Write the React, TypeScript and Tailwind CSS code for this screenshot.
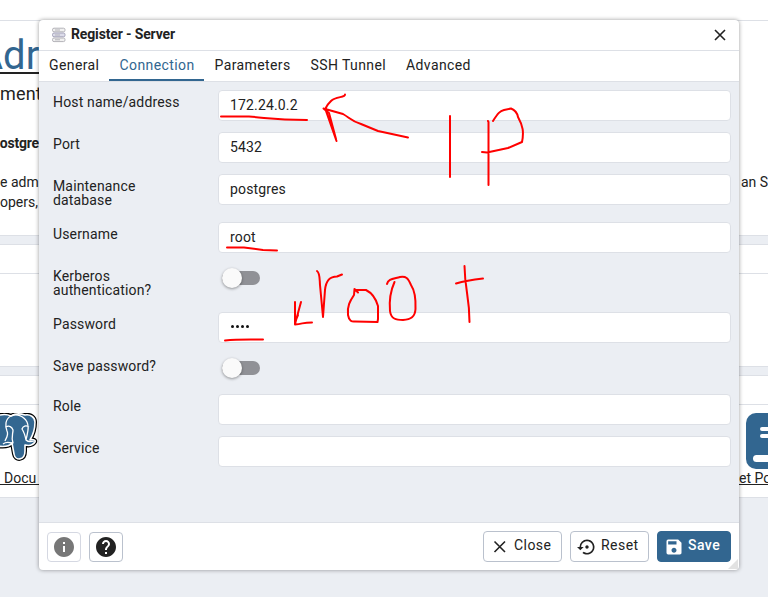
import React from "react";
import { MdInfo, MdHelp, MdSettingsBackupRestore, MdSave } from "react-icons/md";

type FieldProps = { label: string; value?: string; gap: string; toggle?: boolean; password?: boolean };

function Field({ label, value, gap, toggle, password }: FieldProps) {
  return (
    <div className={`flex items-start ${gap}`}>
      <div className="w-[165px] shrink-0 pt-[5px] text-[14px] leading-[14px]">
        <div className="w-[130px]">{label}</div>
      </div>
      {toggle ? (
        <div className="flex h-[26px] w-[42px] items-center pl-[4px]">
          <div className="relative mt-[1px] h-[14px] w-[38px] rounded-full bg-[#909196]">
            <div className="absolute -top-[3px] left-0 size-[20px] rounded-full bg-[#fafafa] shadow-[0_1px_3px_rgba(0,0,0,0.4)]" />
          </div>
        </div>
      ) : (
        <div className="flex h-[31px] flex-1 items-center rounded-[4px] border border-[#dde0e6] bg-white px-[11px] text-[14px]">
          {password ? (
            <div className="flex gap-[2px] pb-[2px] pl-px">
              {[0, 1, 2, 3].map((i) => (
                <span key={i} className="size-[3px] rounded-full bg-[#111]" />
              ))}
            </div>
          ) : (
            <span className="tracking-[0.15px]">{value}</span>
          )}
        </div>
      )}
    </div>
  );
}

function ServerIcon() {
  return (
    <svg width="16" height="16" viewBox="0 0 16 16" fill="none" stroke="#b3b2b8">
      <rect x="1.5" y="1.2" width="12.5" height="3.6" rx="1.5" fill="#f1f1f1" />
      <rect x="1.5" y="6" width="12.5" height="3.8" rx="1.5" fill="#dcdcea" stroke="#a3a2b8" />
      <rect x="1.5" y="11" width="12.5" height="3.6" rx="1.5" fill="#f1f1f1" />
      <path d="M4 3h5M4 8h5M4 12.8h5" />
    </svg>
  );
}

const HEAD = "M-3 3C2 1 7 1 11 3C16 0 22 1 25 2C30 1 35 4 35 9C35 16 33 22 30 27C33 26 36 27 35 29C33 32 29 33 25 32V38C25 48 15 48 14 41L12 30C9 34 3 34-3 33Z";

function Elephant() {
  return (
    <svg width="39" height="50" viewBox="0 0 39 50" className="shrink-0" strokeLinejoin="round">
      <path d={HEAD} fill="#000" stroke="#000" strokeWidth="4" />
      <path d={HEAD} fill="#336791" stroke="#fff" strokeWidth="1.6" />
      <path
        d="M11 3C5 6 5 13 7 18C9 22 6 25 5 28M11 3C16 0 24 3 27 9C30 15 27 21 26 27C28 29 31 29 34 28M6 14C9 12 12 14 13 17C13 21 11 24 13 30C9 30 7 28 3 31M29 14C26 12 23 13 22 16C24 19 25 22 26 27"
        fill="none" stroke="#fff" strokeWidth="1.3"
      />
    </svg>
  );
}

function Dashboard() {
  return (
    <div className="flex h-[597px] flex-col overflow-hidden bg-[#ebeef3] whitespace-nowrap">
      <section className="h-[236px] shrink-0 border-b border-[#dde0e6] bg-white">
        <div className="h-[21px] border-b border-[#dde0e6]" />
        <div className="flex h-[53px] w-[39px] justify-start overflow-hidden border-b-2 border-[#222] text-[40px] leading-[70px] text-[#326690]">
          <span className="-ml-[23px]">Adr</span>
        </div>
        <div className="h-[40px] w-[39px] overflow-hidden text-[18px] leading-[40px] tracking-[0.2px]">ment</div>
        <div className="-ml-[9px] h-[57px] w-[48px] overflow-hidden pt-[19px] text-[14px] leading-[20px] font-bold tracking-[-0.2px]">Postgre</div>
        <div className="flex h-[20px] justify-between text-[14px] leading-[22px]">
          <span>e adm</span>
          <span className="w-[27px]">an S</span>
        </div>
        <div className="text-[14px] leading-[22px]">opers,</div>
      </section>
      <section className="mt-[8px] h-[123px] shrink-0 border-y border-[#dde0e6] bg-white">
        <div className="h-[29px] border-b border-[#dde0e6]" />
      </section>
      <section className="mt-[8px] h-[123px] shrink-0 border-y border-[#dde0e6] bg-white">
        <div className="h-[29px] border-b border-[#dde0e6]" />
        <div className="flex h-[65px] items-start justify-between pt-[8px]">
          <Elephant />
          <svg width="22" height="56" viewBox="0 0 22 56">
            <rect width="56" height="56" rx="10" fill="#326690" />
            <path d="M16 16H30M16 23H30" stroke="#fff" strokeWidth="4" strokeLinecap="round" />
            <rect x="7" y="42" width="40" height="7" rx="3.5" fill="#fff" />
          </svg>
        </div>
        <div className="flex h-[15px] justify-between text-[14px] leading-[16px]">
          <span className="w-[39px] overflow-hidden border-b border-[#222] pl-[4px]">Docu</span>
          <span className="w-[29px] border-b border-[#222]">et Po</span>
        </div>
      </section>
    </div>
  );
}

const BUTTON = "flex h-[31px] items-center rounded-[4px] border text-[14px] tracking-[0.45px]";

function Annotations() {
  return (
    <svg className="pointer-events-none absolute inset-0" width="768" height="597" fill="none" stroke="#ff0000" strokeWidth="2" strokeLinecap="round" strokeLinejoin="round">
      <path d="M221 116.5H249C269 118 275 120 307 120" />
      <path d="M345 94.5C345 98 336 96 331 101C327 105 325 109 326 111L336.500 141M323.500 108.500L343 114C350 118 351 121 361 124L378 131L408 137.500M324 109L329 113L336 139" />
      <path d="M450 116V177M488 121L488.500 122V185M493 121C498 113 500 111 504 110L511 108.500C515 110 517 112 518 117C523 126 524 132 522 142L508 148L487 152.500L482 152" />
      <path d="M227 247.500H244L263 250L277 250.500M225 340.500C238 339 250 339.500 263 339.500" />
      <path d="M295 302V324L301 302M295 324.500C304 323.500 303 322.500 312 322.500M295 322L298 315" />
      <path d="M317 271C320 273 319.500 278 320 285L323 317L325 290C326 280 330 276.500 337 276.500L342 274.500" />
      <path d="M358 292.500L354.500 289L354 295C350 301 347 306 348 315C349 321 352 322 355 321.500L377.500 322L378 319V306C376 299 372 293 366 290H355" />
      <path d="M394.500 282C390 292 389 300 390 311C391 319 396 320 403 320C411 319.500 415 317 415.500 309C416 297 415 291 411 285C408 278 406 276 400 277C393 279 388 279 387 284" />
      <path d="M464.500 266C465 292 469.500 296 469.500 322M456 283.500C464 281 469 280 483 278.500" />
    </svg>
  );
}

export default function App() {
  return (
    <main className="relative h-[597px] w-[768px] overflow-hidden font-[Roboto,'Liberation_Sans',sans-serif] text-[#222]">
      <Dashboard />
      <div className="absolute top-[20px] left-[39px] flex h-[550px] w-[700px] flex-col overflow-hidden rounded-[4px] bg-white shadow-[0_0_4px_rgba(0,0,0,0.4)]">
        <header className="flex h-[31px] shrink-0 items-center border-b border-[#dde0e6] px-[12px]">
          <ServerIcon />
          <span className="ml-[4px] flex-1 pb-[2px] text-[14px] font-bold tracking-[-0.15px]">Register - Server</span>
          <svg width="14" height="14" viewBox="0 0 14 14" stroke="#222" strokeWidth="1.6"><path d="M2 2L12 12M12 2L2 12" /></svg>
        </header>
        <nav className="flex h-[31px] shrink-0 border-b border-[#dde0e6] text-[14px] leading-[28px] tracking-[0.4px]">
          <span className="w-[70px] pl-[10px]">General</span>
          <span className="w-[95px] border-b-2 border-[#326690] pl-[10.5px] text-[#326690]">Connection</span>
          <span className="w-[96px] pl-[10.500px]">Parameters</span>
          <span className="w-[96px] pl-[10.5px]">SSH Tunnel</span>
          <span className="pl-[10px]">Advanced</span>
        </nav>
        <div className="flex-1 bg-[#ebeef3] pt-[8px] pr-[8px] pl-[14px] tracking-[0.15px]">
          <Field label="Host name/address" value="172.24.0.2" gap="h-[42px]" />
          <Field label="Port" value="5432" gap="h-[42px]" />
          <Field label="Maintenance database" value="postgres" gap="h-[48px]" />
          <Field label="Username" value="root" gap="h-[42px]" />
          <Field label="Kerberos authentication?" gap="h-[48px]" toggle />
          <Field label="Password" gap="h-[42px]" password />
          <Field label="Save password?" gap="h-[40px]" toggle />
          <Field label="Role" gap="h-[42px]" />
          <Field label="Service" gap="h-[42px]" />
        </div>
        <footer className="flex h-[48px] shrink-0 items-center border-t border-[#dde0e6] px-[8px]">
          <button className="flex h-[30px] w-[34px] items-center justify-center rounded-[4px] border border-[#d5d8e2]"><MdInfo size={24} color="#777" /></button>
          <button className="ml-[8px] flex h-[30px] w-[34px] items-center justify-center rounded-[4px] border border-[#bac1cd]"><MdHelp size={24} color="#222" /></button>
          <div className="flex-1" />
          <button className={`${BUTTON} w-[79px] border-[#bac1cd] pl-[9px]`}>
            <svg width="14" height="14" viewBox="0 0 14 14" stroke="#222" strokeWidth="1.6"><path d="M1.5 1.5L12 12M12 1.5L1.5 12" /></svg>
            <span className="ml-[7px] pb-[2px]">Close</span>
          </button>
          <button className={`${BUTTON} ml-[8px] w-[79px] border-[#bac1cd] pl-[6px]`}>
            <MdSettingsBackupRestore size={20} /><span className="ml-[4px] pb-[2px]">Reset</span>
          </button>
          <button className={`${BUTTON} ml-[8px] w-[74px] border-[#326690] bg-[#326690] pl-[6px] font-medium text-white`}>
            <MdSave size={20} /><span className="ml-[4px] pb-[2px]">Save</span>
          </button>
        </footer>
        <div className="absolute right-[1px] bottom-[1px] size-[10px] bg-[#e2e2e2] [clip-path:polygon(100%_0,100%_100%,0_100%)]" />
      </div>
      <Annotations />
    </main>
  );
}
